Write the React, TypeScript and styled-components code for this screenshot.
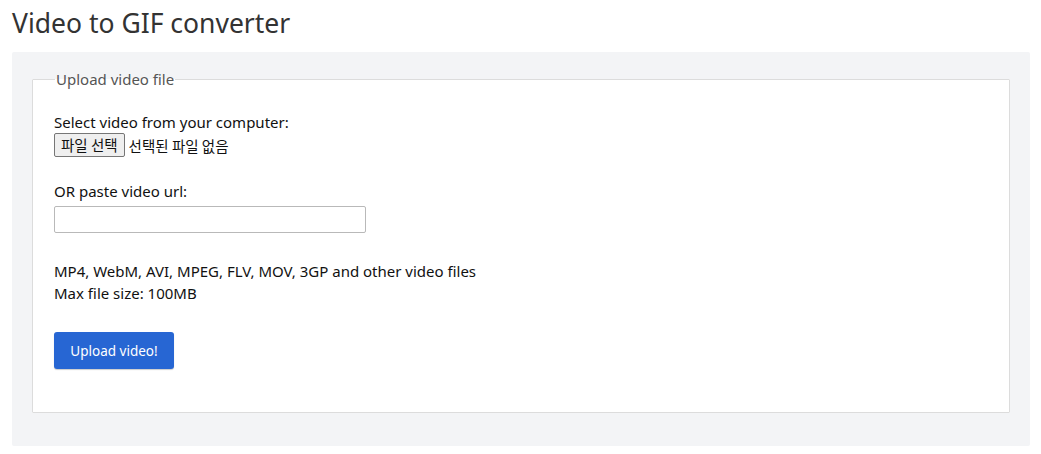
import React from "react";
import styled, { createGlobalStyle } from "styled-components";

const Global = createGlobalStyle`
  html, body { margin: 0; padding: 0; background: #fff; }
  body {
    font-family: "Noto Sans", "Noto Sans CJK KR", sans-serif;
    color: #111;
  }
`;

const Page = styled.div`
  padding: 0 11px 0 12px;
`;

const Title = styled.h1`
  margin: 0;
  padding: 6px 0 12px;
  font-size: 26.5px;
  font-weight: 400;
  line-height: 34px;
  color: #333;
`;

const Panel = styled.div`
  background: #f3f4f6;
  border-radius: 2px;
  padding: 17px 20px 33px;
`;

const Fieldset = styled.fieldset`
  margin: 0;
  background: #fff;
  border: 1px solid #dcdcdc;
  border-radius: 1px;
  padding: 22px 21px 43px;
`;

const Legend = styled.legend`
  padding: 0 1px;
  margin-left: 1px;
  font-size: 15px;
  line-height: 20px;
  color: #555;
`;

const Label = styled.div`
  font-size: 15px;
  line-height: 22px;
  color: #111;
`;

const FileRow = styled.div`
  display: flex;
  align-items: center;
  gap: 4px;
  font-size: 14.5px;
  font-family: "Noto Sans CJK KR", sans-serif;
`;

const FileButton = styled.button`
  height: 24px;
  padding: 0 6px;
  border: 1px solid #767676;
  border-radius: 2px;
  background: #efefef;
  font-family: "Noto Sans CJK KR", sans-serif;
  font-size: 14.5px;
  line-height: 20px;
  color: #111;
`;

const Group = styled.div<{ $top: number }>`
  margin-top: ${(p) => p.$top}px;
`;

const UrlInput = styled.input`
  display: block;
  box-sizing: border-box;
  width: 312px;
  height: 27px;
  margin-top: 4px;
  border: 1px solid #b9b9b9;
  border-radius: 2px;
  padding: 2px 6px;
`;

const Upload = styled.button`
  display: block;
  width: 120px;
  height: 37px;
  border: none;
  border-radius: 3px;
  background: #2766d3;
  color: #fff;
  font-family: "Noto Sans", sans-serif;
  font-size: 13.5px;
  box-shadow: 0 1px 1px rgba(0,0,0,0.2);
`;

export default function App() {
  return (
    <Page>
      <Global />
      <Title>Video to GIF converter</Title>
      <Panel>
        <Fieldset>
          <Legend>Upload video file</Legend>
          <Label>Select video from your computer:</Label>
          <FileRow>
            <FileButton>파일 선택</FileButton>
            <span>선택된 파일 없음</span>
          </FileRow>
          <Group $top={23}>
            <Label>OR paste video url:</Label>
            <UrlInput type="text" />
          </Group>
          <Group $top={27}>
            <Label>MP4, WebM, AVI, MPEG, FLV, MOV, 3GP and other video files</Label>
            <Label>Max file size: 100MB</Label>
          </Group>
          <Group $top={28}>
            <Upload>Upload video!</Upload>
          </Group>
        </Fieldset>
      </Panel>
    </Page>
  );
}
